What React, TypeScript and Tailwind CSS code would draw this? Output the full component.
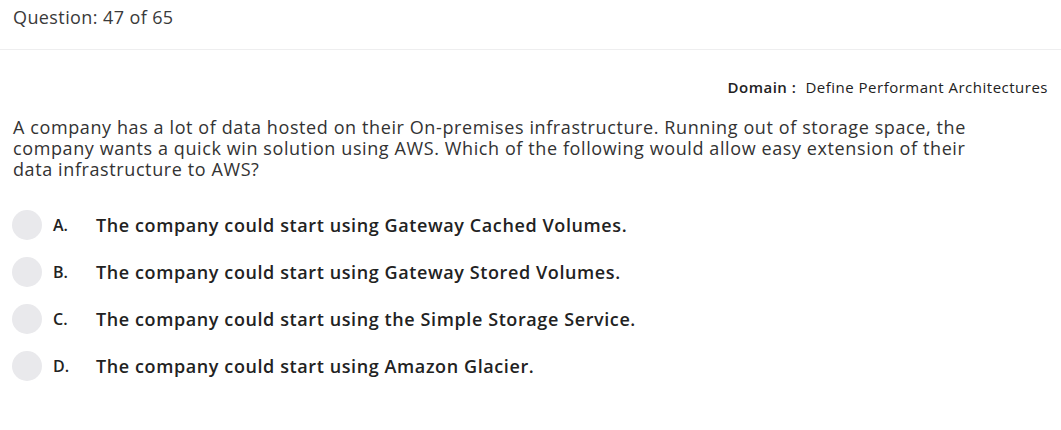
const options = [
  { letter: "A.", text: "The company could start using Gateway Cached Volumes." },
  { letter: "B.", text: "The company could start using Gateway Stored Volumes." },
  { letter: "C.", text: "The company could start using the Simple Storage Service." },
  { letter: "D.", text: "The company could start using Amazon Glacier." },
];

export default function App() {
  return (
    <div className="w-[1061px] h-[430px] bg-white text-[#333] font-['Open_Sans',sans-serif]">
      <div className="h-[50px] border-b border-[#eeeeef] px-[13px] pt-[5px] text-[18px] leading-[24px] tracking-[0.4px] text-[#3a3a3a]">
        Question: 47 of 65
      </div>

      <div className="flex justify-end pr-[13px] pt-[27px] text-[15px] leading-[20px] tracking-[0.5px] text-[#222]">
        <span className="font-semibold">Domain :</span>
        <span className="ml-[9px]">Define Performant Architectures</span>
      </div>

      <p className="px-[13px] pt-[20px] text-[18px] leading-[21px] tracking-[0.6px] text-[#333]">
        A company has a lot of data hosted on their On-premises infrastructure. Running out of storage space, the
        <br />
        company wants a quick win solution using AWS. Which of the following would allow easy extension of their
        <br />
        data infrastructure to AWS?
      </p>

      <div className="mt-[30px] flex flex-col gap-[17px] px-[12px]">
        {options.map((o) => (
          <div key={o.letter} className="flex items-center h-[30px]">
            <span className="h-[30px] w-[30px] rounded-full bg-[#e9e9ec] shrink-0" />
            <span className="ml-[11px] w-[43px] text-[16px] font-semibold text-[#222]">{o.letter}</span>
            <span className="text-[18px] font-semibold tracking-[0.6px] text-[#222]">{o.text}</span>
          </div>
        ))}
      </div>
    </div>
  );
}
